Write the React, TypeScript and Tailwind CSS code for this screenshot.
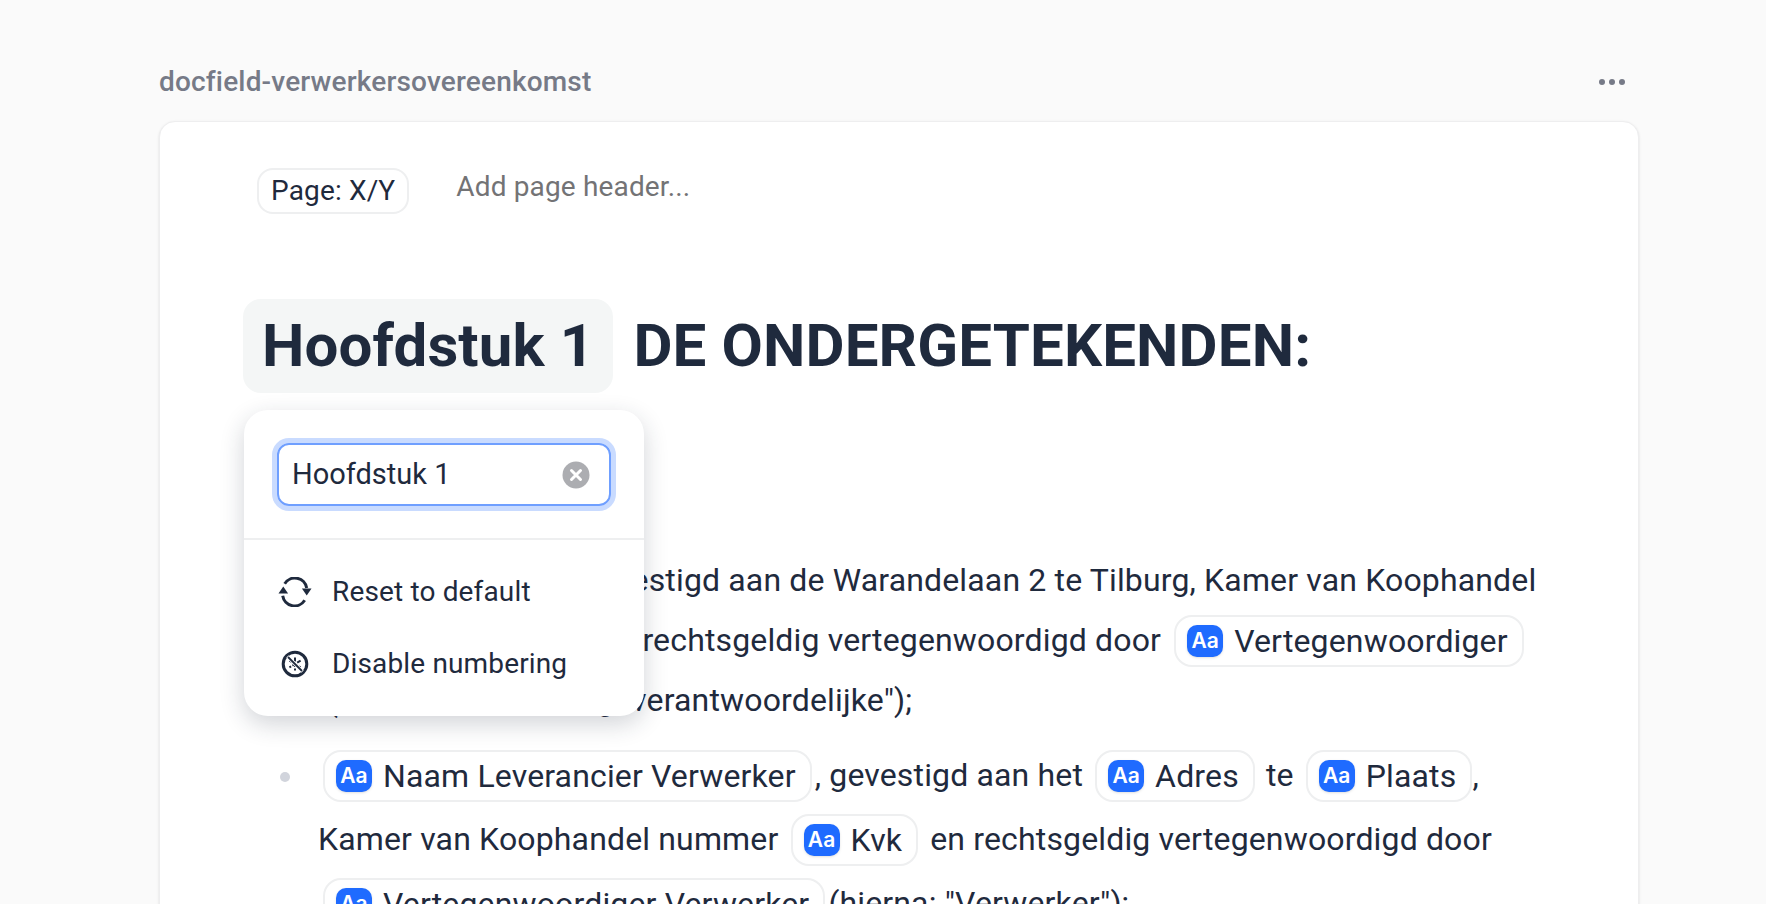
import React from "react";

function AaChip({ label, className = "" }: { label: string; className?: string }) {
  return (
    <span className={`inline-flex items-center align-[3px] h-[52px] pl-[11px] pr-[14px] gap-[11px] rounded-[18px] border-2 border-[#eeeff0] bg-white ${className}`}>
      <span className="flex items-center justify-center w-[36px] h-[32px] rounded-[10px] bg-[#1f6bff] font-['Inter',sans-serif] tracking-normal text-white text-[21px] font-semibold shadow-sm">
        Aa
      </span>
      <span>{label}</span>
    </span>
  );
}

function ResetIcon() {
  return (
    <svg width="34" height="30" viewBox="0 0 34 30" fill="none" className="shrink-0">
      <path d="M6.700 6.700A12 12 0 0 1 28.700 11" stroke="#1f2a3d" strokeWidth="3" />
      <path d="M4.700 18.700A12 12 0 0 0 26.700 23.300" stroke="#1f2a3d" strokeWidth="3" />
      <path d="M0.500 16.500h9.600L5.300 9.500z" fill="#1f2a3d" />
      <path d="M23.900 11.500h9.600l-4.800 7z" fill="#1f2a3d" />
    </svg>
  );
}

function NoNumberingIcon() {
  return (
    <svg width="34" height="30" viewBox="0 0 34 30" fill="none" className="shrink-0">
      <circle cx="17" cy="15" r="11.800" stroke="#1f2a3d" strokeWidth="3" />
      <path d="M17 8.500v13M11.400 11.700l11.200 6.600M22.600 11.700l-11.200 6.600" stroke="#1f2a3d" strokeWidth="2" strokeDasharray="4 1.500" />
      <path d="M9.500 7.500l15 15" stroke="#ffffff" strokeWidth="3.500" />
      <path d="M10 8l14 14" stroke="#1f2a3d" strokeWidth="1.800" />
    </svg>
  );
}

function ClearIcon() {
  return (
    <svg width="28" height="28" viewBox="0 0 28 28" className="shrink-0">
      <circle cx="14" cy="14" r="13.500" fill="#acadb1" />
      <path d="M9.500 9.500l9 9M18.500 9.500l-9 9" stroke="#ffffff" strokeWidth="3" strokeLinecap="round" />
    </svg>
  );
}

export default function App() {
  return (
    <div className="h-[904px] overflow-hidden bg-[#fafafa] pl-[159px] pr-[127px] pt-[62px] font-['Roboto',sans-serif] text-[#1f2a3d]">
      <div className="flex items-center justify-between h-[40px] pr-[14px]">
        <span className="text-[28px] font-medium tracking-[0.170px] text-[#767a87]">docfield-verwerkersovereenkomst</span>
        <span className="flex gap-[4px]">
          <span className="w-[6px] h-[6px] rounded-full bg-[#767a87]" />
          <span className="w-[6px] h-[6px] rounded-full bg-[#767a87]" />
          <span className="w-[6px] h-[6px] rounded-full bg-[#767a87]" />
        </span>
      </div>

      <div className="relative mt-[19px] h-[900px] rounded-[16px] border border-[#eeeeef] bg-white shadow-sm pl-[83px] pr-[96px] pt-[46px]">
        {/* page header */}
        <div className="flex items-start pl-[14px] text-[28px] tracking-[0.150px]">
          <span className="inline-flex items-center h-[46px] px-[12px] rounded-[16px] border-2 border-[#eeeff0]">
            Page: X/Y
          </span>
          <span className="ml-[47px] -mt-[2px] text-[#737375]">Add page header...</span>
        </div>

        {/* heading */}
        <div className="mt-[85px] flex items-center text-[60px] font-bold tracking-[0.150px]">
          <span className="flex items-center h-[94px] px-[19px] rounded-[18px] bg-[#f4f6f6]">
            Hoofdstuk 1
          </span>
          <span className="ml-[20px]">DE ONDERGETEKENDEN:</span>
        </div>

        {/* list */}
        <ul className="mt-[157px] text-[32px] leading-[60px] tracking-[0.150px]">
          <li className="flex">
            <span className="w-[75px] shrink-0" />
            <div className="whitespace-nowrap">
              <div>
                <AaChip label="Naam Klant" className="ml-[4px]" />, gevestigd aan de Warandelaan 2 te Tilburg, Kamer van Koophandel
              </div>
              <div>
                nummer 12345678 en rechtsgeldig vertegenwoordigd door <AaChip label="Vertegenwoordiger" className="ml-[5px]" />
              </div>
              <div className="pl-[9px]">(hierna: "Verwerkingsverantwoordelijke");</div>
            </div>
          </li>
          <li className="flex mt-[13px]">
            <span className="w-[75px] shrink-0 pl-[37px] pt-[29px]">
              <span className="block w-[10px] h-[10px] rounded-full bg-[#d1d4dc]" />
            </span>
            <div className="leading-[64px] whitespace-nowrap">
              <div>
                <AaChip label="Naam Leverancier Verwerker" className="ml-[5px] mr-[3px]" />, gevestigd aan het <AaChip label="Adres" className="ml-[4px] mr-[3px]" /> te <AaChip label="Plaats" className="ml-[4px]" />,
              </div>
              <div>
                Kamer van Koophandel nummer <AaChip label="Kvk" className="mx-[4px]" /> en rechtsgeldig vertegenwoordigd door
              </div>
              <div>
                <AaChip label="Vertegenwoordiger Verwerker" className="ml-[5px] mr-[3px]" />(hierna: "Verwerker");
              </div>
            </div>
          </li>
        </ul>

        {/* numbering popover */}
        <div className="absolute left-[84px] top-[288px] w-[400px] h-[306px] rounded-[24px] bg-white shadow-[0_8px_24px_rgba(31,42,61,0.2)] z-10">
          <div className="h-[130px] px-[33px] pt-[33px] border-b-2 border-[#eeeff0]">
            <div className="flex items-center justify-between h-[63px] pl-[13px] pr-[19px] rounded-[12px] border-2 border-[#6f9fff] ring-[5px] ring-[#c9dbff] text-[29px]">
              Hoofdstuk 1
              <ClearIcon />
            </div>
          </div>
          <div className="pl-[34px] pt-[16px] text-[28px] tracking-[0.150px]">
            <div className="flex items-center gap-[20px] h-[72px]">
              <ResetIcon />
              Reset to default
            </div>
            <div className="flex items-center gap-[20px] h-[72px]">
              <NoNumberingIcon />
              Disable numbering
            </div>
          </div>
        </div>
      </div>
    </div>
  );
}
